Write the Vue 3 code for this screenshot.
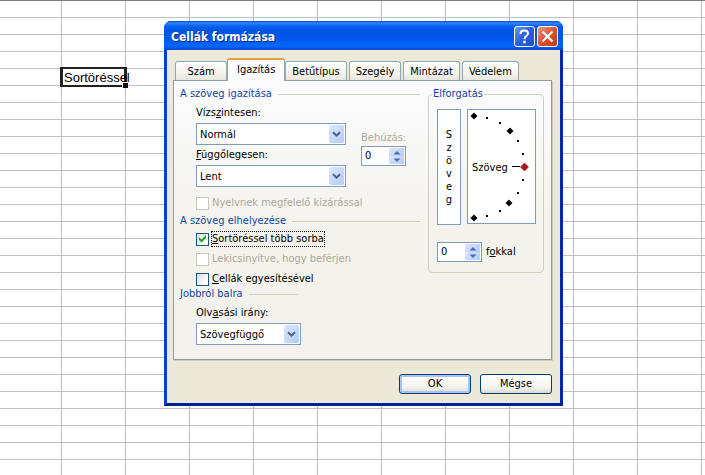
<script setup>
import { ref } from 'vue'

const rows = 30
const cols = 26

const tabs = ['Szám', 'Igazítás', 'Betűtípus', 'Szegély', 'Mintázat', 'Védelem']
const activeTab = ref('Igazítás')

const horizontal = ref('Normál')
const vertical = ref('Lent')
const direction = ref('Szövegfüggő')
const indent = ref(0)
const degrees = ref(0)
const justify = ref(false)
const wrap = ref(true)
const shrink = ref(false)
const merge = ref(false)

// big marks every 45 degrees, small ones every 15
const diamonds = [[6, 6], [42, 21], [41, 93], [6, 108]]
const dots = [[19, 8], [32, 13], [50, 31], [55, 44], [55, 70], [50, 83], [32, 101], [19, 106]]
</script>

<template>
  <main class="desktop">
    <table class="sheet">
      <tbody>
        <tr v-for="r in rows" :key="r">
          <td v-for="c in cols" :key="c">
            <div v-if="r === 5 && c === 2" class="active-cell">
              <span class="cell-text">Sortöréssel</span>
              <span class="handle"></span>
            </div>
          </td>
        </tr>
      </tbody>
    </table>

    <form class="dialog" role="dialog" aria-labelledby="dialog-title" @submit.prevent>
      <header class="titlebar">
        <h1 id="dialog-title">Cellák formázása</h1>
        <button type="button" class="caption help" aria-label="Súgó">
          <svg width="21" height="21" viewBox="0 0 21 21" fill="none" stroke="#fff" stroke-width="2">
            <path d="M6.5 8V7.5C6.5 5.5 8 4.5 10.2 4.5C12.5 4.5 14 5.6 14 7.5C14 9.8 10.5 10 10.5 13.2" />
            <path d="M9.3 16h2.4" stroke-width="2.4" />
          </svg>
        </button>
        <button type="button" class="caption close" aria-label="Bezárás">
          <svg width="21" height="21" viewBox="0 0 21 21" fill="none" stroke="#fff" stroke-width="2.2">
            <path d="M5.5 5.5L15.5 15.5M15.5 5.5L5.5 15.5" />
          </svg>
        </button>
      </header>

      <div class="body">
        <div class="tabs" role="tablist">
          <button
            v-for="tab in tabs"
            :key="tab"
            type="button"
            role="tab"
            class="tab"
            :class="{ active: tab === activeTab }"
            :aria-selected="tab === activeTab"
            @click="activeTab = tab"
          >{{ tab }}</button>
        </div>

        <div class="panel">
          <div class="settings">
            <h2>A szöveg igazítása</h2>
            <div class="align-row">
              <div class="fields">
                <label for="horizontal">Vízs<u>z</u>intesen:</label>
                <div class="combo">
                  <select id="horizontal" v-model="horizontal">
                    <option>Normál</option>
                    <option>Balra</option>
                    <option>Középre</option>
                    <option>Jobbra</option>
                  </select>
                  <span class="arrow">
                    <svg width="9" height="7" viewBox="0 0 9 7"><path d="M1 1.2L4.5 4.7L8 1.2" /></svg>
                  </span>
                </div>
                <label for="vertical"><u>F</u>üggőlegesen:</label>
                <div class="combo">
                  <select id="vertical" v-model="vertical">
                    <option>Fent</option>
                    <option>Középen</option>
                    <option>Lent</option>
                  </select>
                  <span class="arrow">
                    <svg width="9" height="7" viewBox="0 0 9 7"><path d="M1 1.2L4.5 4.7L8 1.2" /></svg>
                  </span>
                </div>
              </div>
              <div class="indent">
                <label for="indent" class="muted">Behúzás:</label>
                <div class="spin">
                  <input id="indent" v-model.number="indent" type="text" inputmode="numeric">
                  <div class="steps">
                    <button type="button" aria-label="Növelés" @click="indent++">
                      <svg width="8" height="5" viewBox="0 0 8 5"><path d="M0.5 4.5L4 1L7.5 4.5Z" /></svg>
                    </button>
                    <button type="button" aria-label="Csökkentés" @click="indent--">
                      <svg width="8" height="5" viewBox="0 0 8 5"><path d="M0.5 0.5L4 4L7.5 0.5Z" /></svg>
                    </button>
                  </div>
                </div>
              </div>
            </div>
            <label class="check muted">
              <input v-model="justify" type="checkbox" disabled>
              <span>Nyelvnek megfelelő kizárással</span>
            </label>

            <h2>A szöveg elhelyezése</h2>
            <div class="checks">
              <label class="check focused">
                <input v-model="wrap" type="checkbox">
                <span><u>S</u>ortöréssel több sorba</span>
                <svg v-if="wrap" class="tick" width="13" height="13" viewBox="0 0 13 13">
                  <path d="M3 5L5.5 7.5L10 3V6L5.5 10.5L3 8Z" fill="#21a121" />
                </svg>
              </label>
              <label class="check muted">
                <input v-model="shrink" type="checkbox" disabled>
                <span>Lekicsinyítve, hogy beférjen</span>
              </label>
              <label class="check">
                <input v-model="merge" type="checkbox">
                <span><u>C</u>ellák egyesítésével</span>
              </label>
            </div>

            <h2 class="short">Jobbról balra</h2>
            <div class="fields narrow">
              <label for="direction">Olv<u>a</u>sási irány:</label>
              <div class="combo">
                <select id="direction" v-model="direction">
                  <option>Szövegfüggő</option>
                  <option>Balról jobbra</option>
                  <option>Jobbról balra</option>
                </select>
                <span class="arrow">
                  <svg width="9" height="7" viewBox="0 0 9 7"><path d="M1 1.2L4.5 4.7L8 1.2" /></svg>
                </span>
              </div>
            </div>
          </div>

          <fieldset class="rotation">
            <legend>Elforgatás</legend>
            <div class="rotate-row">
              <button type="button" class="stacked" aria-label="Szöveg">
                <span v-for="(ch, i) in 'Szöveg'" :key="i">{{ ch }}</span>
              </button>
              <div class="dial">
                <span>Szöveg</span>
                <svg viewBox="0 0 67 113" width="67" height="113">
                  <path
                    v-for="([x, y], i) in diamonds"
                    :key="i"
                    :d="`M${x - 3.5} ${y}l3.5 -3.5l3.5 3.5l-3.5 3.5z`"
                  />
                  <rect v-for="([x, y], i) in dots" :key="i" :x="x - 1" :y="y - 1" width="2" height="2" />
                  <path d="M44 56.5h8" stroke="#000" />
                  <path d="M52.5 57l4 -4l4 4l-4 4z" fill="#b5121b" stroke="#600" stroke-width="0.5" />
                </svg>
              </div>
            </div>
            <div class="degrees">
              <div class="spin">
                <input id="degrees" v-model.number="degrees" type="text" inputmode="numeric">
                <div class="steps">
                  <button type="button" aria-label="Növelés" @click="degrees++">
                    <svg width="8" height="5" viewBox="0 0 8 5"><path d="M0.5 4.5L4 1L7.5 4.5Z" /></svg>
                  </button>
                  <button type="button" aria-label="Csökkentés" @click="degrees--">
                    <svg width="8" height="5" viewBox="0 0 8 5"><path d="M0.5 0.5L4 4L7.5 0.5Z" /></svg>
                  </button>
                </div>
              </div>
              <label for="degrees">f<u>o</u>kkal</label>
            </div>
          </fieldset>
        </div>

        <footer class="actions">
          <button type="submit" class="push default">OK</button>
          <button type="button" class="push">Mégse</button>
        </footer>
      </div>
    </form>
  </main>
</template>

<style>
body {
  margin: 0;
}
</style>

<style scoped>
.desktop {
  position: relative;
  height: 100vh;
  overflow: hidden;
  box-sizing: border-box;
  border-top: 1px solid #808078;
  background: #fff;
  color: #000;
  font: 11px/14px 'DejaVu Sans Condensed', 'DejaVu Sans', sans-serif;
}

.desktop *,
.desktop *::before {
  box-sizing: border-box;
}

button,
input,
select {
  margin: 0;
  padding: 0;
  font: inherit;
  color: inherit;
}

/* worksheet */
.sheet {
  width: 1662px;
  table-layout: fixed;
  border-collapse: separate;
  border-spacing: 0;
}

.sheet td {
  width: 64px;
  height: 17px;
  padding: 0;
  border-right: 1px solid #c0c0c0;
  border-bottom: 1px solid #c0c0c0;
}

.sheet td:first-child {
  width: 62px;
}

.active-cell {
  position: relative;
  height: 16px;
}

.active-cell::before {
  content: '';
  position: absolute;
  inset: -2px;
  border: 3px solid #222;
  border-top-width: 2px;
  border-bottom-width: 2px;
}

.cell-text {
  position: absolute;
  left: 2px;
  top: 1px;
  font: 13px/16px 'Liberation Sans', Arial, sans-serif;
}

.handle {
  position: absolute;
  right: -3px;
  bottom: -3px;
  width: 6px;
  height: 6px;
  background: #111;
  border: 1px solid #fff;
  border-right: none;
  border-bottom: none;
}

/* dialog window */
.dialog {
  position: absolute;
  left: 164px;
  top: 20px;
  width: 399px;
  border: 3px solid #0a3fd0;
  border-top: none;
  border-right-color: #0229a0;
  border-bottom-color: #00208f;
  border-radius: 7px 7px 0 0;
  background: #0a3fd0;
}

.titlebar {
  display: flex;
  align-items: center;
  gap: 2px;
  height: 29px;
  margin: 0 -3px;
  padding: 2px 5px 0 7px;
  border-radius: 7px 7px 0 0;
  background: linear-gradient(#0a45cf 0, #2f86ff 2px, #0a62f0 5px, #0054e3 9px, #0058ec 18px, #0067ff 25px, #0049c8 29px);
}

.titlebar h1 {
  flex: 1;
  margin: 0;
  color: #fff;
  font: bold 12px/18px 'DejaVu Sans Condensed', 'DejaVu Sans', sans-serif;
  text-shadow: 1px 1px #0a2a88;
}

.caption {
  width: 21px;
  height: 21px;
  border: 1px solid #fff;
  border-radius: 3px;
  overflow: hidden;
}

.caption svg {
  display: block;
  margin: -1px;
}

.help {
  background: linear-gradient(135deg, #6f9cf5, #2c5fdf 50%, #2050c8);
}

.close {
  background: linear-gradient(135deg, #ee9a80, #dd5030 50%, #c33a14);
}

.body {
  padding: 8px 8px 9px 6px;
  background: #ece9d8;
  box-shadow: inset 2px -1px #dce9f5;
}

.tabs {
  display: flex;
  align-items: flex-end;
  gap: 2px;
  height: 22px;
  padding-left: 2px;
}

.tab {
  height: 19px;
  min-width: 52px;
  padding: 1px 6px 0;
  border: 1px solid #91a7b4;
  border-bottom: none;
  border-radius: 3px 3px 0 0;
  background: linear-gradient(#fff, #f5f4ee 60%, #e8e6dc);
}

.tab.active {
  position: relative;
  height: 23px;
  margin: 0 -2px -1px;
  padding: 0 9px 2px;
  border-top: 2px solid #e5a136;
  background: #fcfcfe;
}

.panel {
  display: flex;
  align-items: flex-start;
  gap: 8px;
  padding: 6px 7px 14px 6px;
  border: 1px solid #919b9c;
  background: linear-gradient(#fcfcfe, #f4f3ee 50%, #f2f1ec);
  box-shadow: 1px 1px #d0ceba;
}

.settings {
  flex: 1;
}

h2 {
  display: flex;
  align-items: center;
  gap: 6px;
  margin: 0;
  color: #1543a5;
  font: inherit;
}

h2::after {
  content: '';
  flex: 1;
  height: 1px;
  background: #d0d0bf;
}

h2.short {
  width: 118px;
}

.align-row {
  display: flex;
  gap: 15px;
  padding-left: 16px;
}

.fields {
  display: flex;
  flex-direction: column;
  gap: 2px;
  width: 150px;
  padding-top: 4px;
  line-height: 16px;
}

.narrow {
  width: 121px;
  padding-left: 16px;
}

.combo {
  position: relative;
  height: 22px;
}

.combo select {
  display: block;
  width: 100%;
  height: 22px;
  padding: 1px 20px 0 3px;
  appearance: none;
  border: 1px solid #7f9db9;
  border-radius: 0;
  background: #fff;
}

.arrow {
  position: absolute;
  top: 2px;
  right: 2px;
  display: flex;
  align-items: center;
  justify-content: center;
  width: 15px;
  height: 18px;
  border-radius: 2px;
  background: linear-gradient(135deg, #dce7fe, #b4caf7);
  pointer-events: none;
}

.arrow path {
  fill: none;
  stroke: #4d6185;
  stroke-width: 2;
}

.muted {
  color: #aca899;
}

.indent {
  display: flex;
  flex-direction: column;
  gap: 1px;
  padding-top: 30px;
}

.spin {
  display: flex;
  width: 45px;
  height: 20px;
  border: 1px solid #7f9db9;
  background: #fff;
}

.spin input {
  flex: 1;
  min-width: 0;
  padding-left: 3px;
  border: none;
  outline: none;
  background: transparent;
}

.steps {
  display: flex;
  flex-direction: column;
  width: 16px;
  padding: 1px 1px 1px 0;
}

.steps button {
  display: flex;
  flex: 1;
  align-items: center;
  justify-content: center;
  border: none;
  background: linear-gradient(135deg, #dce7fe, #b4caf7);
}

.steps path {
  fill: #4d6fae;
}

.check {
  position: relative;
  display: flex;
  align-items: center;
  gap: 2px;
  width: max-content;
  margin-left: 16px;
  line-height: 16px;
}

.check input {
  width: 13px;
  height: 13px;
  appearance: none;
  border: 1px solid #1c5180;
  background: linear-gradient(135deg, #dcdcd7, #fff 80%);
}

.check input:disabled {
  border-color: #cac8bb;
  background: #fff;
}

.check span {
  padding: 0 1px;
}

.focused span {
  outline: 1px dotted #000;
  outline-offset: -1px;
}

.tick {
  position: absolute;
  left: 0;
  top: 1px;
  pointer-events: none;
}

.align-row + .check {
  margin-top: 8px;
  margin-bottom: 3px;
}

.checks {
  display: flex;
  flex-direction: column;
  gap: 4px;
  padding-top: 3px;
}

/* rotation group */
.rotation {
  width: 116px;
  margin: 0;
  padding: 8px 7px 10px 8px;
  border: 1px solid #d0d0bf;
  border-radius: 4px;
}

.rotation legend {
  margin-left: -5px;
  padding: 0 1px;
  color: #1543a5;
}

.rotate-row {
  display: flex;
  gap: 6px;
}

.stacked {
  display: flex;
  flex-direction: column;
  align-items: center;
  justify-content: center;
  width: 24px;
  height: 116px;
  border: 1px solid #7f9db9;
  background: #fff;
  line-height: 13px;
}

.dial {
  position: relative;
  display: flex;
  align-items: center;
  width: 69px;
  height: 115px;
  padding: 2px 0 0 4px;
  border: 1px solid #7f9db9;
  background: #fff;
}

.dial svg {
  position: absolute;
  inset: 0;
}

.degrees {
  display: flex;
  align-items: center;
  gap: 4px;
  margin-top: 17px;
}

/* buttons */
.actions {
  display: flex;
  justify-content: flex-end;
  gap: 9px;
  padding-top: 14px;
}

.push {
  width: 72px;
  height: 20px;
  border: 1px solid #003c74;
  border-radius: 3px;
  background: linear-gradient(#fff, #f4f3ee 70%, #dcd8cb);
}

.push.default {
  box-shadow: inset 0 0 0 2px #a9c3f0;
}
</style>
